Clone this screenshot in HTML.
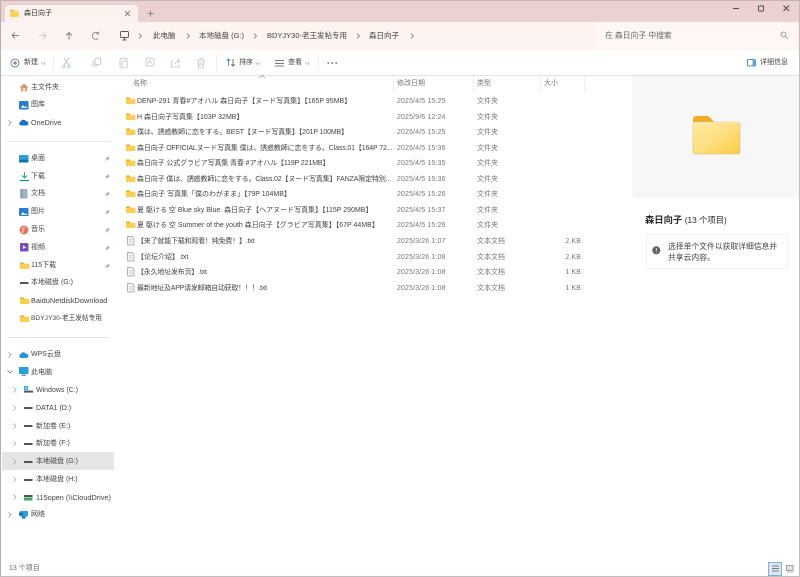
<!DOCTYPE html>
<html lang="zh">
<head>
<meta charset="utf-8">
<title>森日向子</title>
<style>
html,body{margin:0;padding:0;width:800px;height:577px;overflow:hidden;background:#fff;}
body{font-family:"Liberation Sans","Noto Sans CJK JP","Noto Sans CJK SC",sans-serif;font-size:7px;color:#3a3a3a;position:relative;filter:blur(.3px);}
.a{position:absolute;white-space:nowrap;}
.t{position:absolute;white-space:nowrap;line-height:12px;height:12px;}
svg{position:absolute;overflow:visible;}
.n{color:#444;font-size:7px;}
.d{color:#777;font-size:7px;letter-spacing:.13px;left:397px;}
.y{color:#777;font-size:7px;left:477px;}
.s{color:#777;font-size:7px;letter-spacing:.1px;right:219px;}
.f{color:#444;font-size:7px;left:137px;}
.h{color:#777;font-size:7px;top:78px;}
.tb{fill:none;stroke:#b8c4cc;stroke-width:.8;}
</style>
</head>
<body>
<!-- title / address / toolbar backgrounds -->
<div class="a" style="left:0;top:0;width:800px;height:22px;background:#ebd2d0;"></div>
<div class="a" style="left:0;top:22px;width:800px;height:28px;background:#fdf3f1;"></div>
<div class="a" style="left:0;top:50px;width:800px;height:25px;background:#fff;"></div>
<div class="a" style="left:0;top:75px;width:800px;height:1px;background:#e4e0e0;"></div>
<div class="a" style="left:0;top:0;width:1px;height:577px;background:#b5b0b0;"></div>
<div class="a" style="left:799px;top:0;width:1px;height:577px;background:#c0bcbc;"></div>
<div class="a" style="left:0;top:0;width:800px;height:1px;background:#c4b4b3;"></div>
<div class="a" style="left:0;top:576px;width:800px;height:1px;background:#c0bcbc;"></div>

<!-- tab -->
<div class="a" style="left:5px;top:5px;width:133px;height:17px;background:#fbf1ef;border-radius:4px 4px 0 0;"></div>
<svg style="left:10px;top:9px" width="9" height="8" viewBox="0 0 9 8"><path d="M0 1h3.500l1 1H9v6H0z" fill="#fbd45f"/><path d="M0 1h3.500l1 1H0z" fill="#eeb02c"/></svg>
<div class="t" style="left:24px;top:8px;font-size:7px;color:#333;">森日向子</div>
<svg style="left:124px;top:10px" width="7" height="7"><path d="M1 1l5 5M6 1L1 6" stroke="#666" stroke-width=".8"/></svg>
<svg style="left:147px;top:10px" width="7" height="7"><path d="M3.500 .5v6M.5 3.500h6" stroke="#777" stroke-width=".8"/></svg>

<!-- window controls -->
<svg style="left:730px;top:3px" width="62" height="12"><path d="M3 5.500h6" stroke="#444" stroke-width=".9"/><rect x="28.500" y="3" width="5" height="5" fill="none" stroke="#444" stroke-width=".9" rx=".6"/><path d="M53.500 2.500l5.500 5.500M59 2.500L53.500 8" stroke="#444" stroke-width=".9"/></svg>

<!-- nav -->
<svg style="left:11px;top:30px" width="100" height="12" viewBox="0 0 100 12">
<path d="M1 5.500h7M1 5.500l3-3M1 5.500l3 3" fill="none" stroke="#666" stroke-width=".8"/>
<path d="M28 5.500h7M35 5.500l-3-3M35 5.500l-3 3" fill="none" stroke="#c4c0c0" stroke-width=".8"/>
<path d="M58 9.500v-7M58 2.500l-3 3M58 2.500l3 3" fill="none" stroke="#666" stroke-width=".8"/>
<path d="M87.500 2.500a3.500 3.500 0 1 0 0 5.500M88 1v2.500h-2.500" transform="translate(-.5,.5)" fill="none" stroke="#777" stroke-width=".8"/>
</svg>
<svg style="left:120px;top:31px" width="10" height="10"><rect x=".5" y=".5" width="8" height="6" rx="1" fill="none" stroke="#555" stroke-width=".9"/><path d="M2.500 9h4M4.500 7v2" stroke="#555" stroke-width=".9"/></svg>
<svg style="left:138px;top:32px" width="280" height="8" fill="none" stroke="#666" stroke-width=".7"><path d="M1 1.500l2.500 2.500L1 6.500"/><path d="M49 1.500l2.500 2.500L49 6.500"/><path d="M116 1.500l2.500 2.500L116 6.500"/><path d="M219 1.500l2.500 2.500L219 6.500"/><path d="M273 1.500l2.500 2.500L273 6.500"/></svg>
<div class="t" style="left:153px;top:30px;color:#444;font-size:7.5px;">此电脑</div>
<div class="t" style="left:199px;top:30px;color:#444;font-size:7.5px;">本地磁盘 (G:)</div>
<div class="t" style="left:267px;top:30px;color:#444;font-size:7.5px;">BDYJY30-老王发帖专用</div>
<div class="t" style="left:369px;top:30px;color:#444;font-size:7.5px;">森日向子</div>
<div class="a" style="left:596px;top:23px;width:197px;height:26px;background:#fef7f6;"></div>
<div class="t" style="left:605px;top:30px;color:#666;font-size:7.8px;">在 森日向子 中搜索</div>
<svg style="left:780px;top:31px" width="9" height="9"><circle cx="3.500" cy="3.500" r="2.500" fill="none" stroke="#888" stroke-width=".8"/><path d="M5.500 5.500L8 8" stroke="#888" stroke-width=".8"/></svg>

<!-- toolbar -->
<svg style="left:10px;top:58px" width="10" height="10"><circle cx="5" cy="5" r="4" fill="none" stroke="#33689a" stroke-width=".7"/><path d="M5 3v4M3 5h4" stroke="#444" stroke-width=".7"/></svg>
<div class="t" style="left:24px;top:57px;color:#444;">新建</div>
<svg style="left:41px;top:62px" width="5" height="4"><path d="M.5 .5L2.500 2.500 4.500 .5" fill="none" stroke="#999" stroke-width=".6"/></svg>
<div class="a" style="left:53px;top:55px;width:1px;height:15px;background:#eee;"></div>
<svg style="left:62px;top:57px" width="145" height="12" viewBox="0 0 145 12" class="tb">
<path d="M2 1l5 7M7 1L2 8"/><circle cx="1.800" cy="9.500" r="1.300"/><circle cx="7" cy="9.500" r="1.300"/>
<rect x="33" y="1" width="5.500" height="6.500" rx="1"/><path d="M31 3.500v5.500h5"/>
<rect x="58" y="1.500" width="7" height="9" rx="1"/><rect x="60" y="4" width="5" height="7" rx=".8" fill="#fff"/>
<rect x="84" y="1" width="8" height="8" rx="1.500"/><path d="M86 7l2-4 2 4"/>
<path d="M111 4h-1.500v6h7.500V7.500"/><path d="M113 7c.5-2 2-3 4-3M115.500 2l2 2-2 2"/>
<path d="M135 3h8M136 3l.7 8h4.600l.7-8M137.500 1.500h3"/><path d="M138 5v4M140 5v4"/>
</svg>
<div class="a" style="left:216px;top:55px;width:1px;height:15px;background:#eee;"></div>
<svg style="left:226px;top:58px" width="10" height="9"><path d="M2.500 8V1M.8 2.700L2.500 1l1.700 1.700" fill="none" stroke="#3a76a8" stroke-width=".8"/><path d="M7 1v7M5.300 6.300L7 8l1.700-1.700" fill="none" stroke="#555" stroke-width=".8"/></svg>
<div class="t" style="left:239px;top:57px;color:#444;">排序</div>
<svg style="left:255px;top:62px" width="5" height="4"><path d="M.5 .5L2.500 2.500 4.500 .5" fill="none" stroke="#999" stroke-width=".6"/></svg>
<svg style="left:275px;top:60px" width="10" height="7"><path d="M0 .5h9M0 3.300h9M0 6h9" stroke="#555" stroke-width=".8"/></svg>
<div class="t" style="left:288px;top:57px;color:#444;">查看</div>
<svg style="left:305px;top:62px" width="5" height="4"><path d="M.5 .5L2.500 2.500 4.500 .5" fill="none" stroke="#999" stroke-width=".6"/></svg>
<div class="a" style="left:318px;top:55px;width:1px;height:15px;background:#eee;"></div>
<svg style="left:327px;top:62px" width="11" height="3"><circle cx="1.200" cy="1" r=".8" fill="#444"/><circle cx="5.200" cy="1" r=".8" fill="#444"/><circle cx="9.200" cy="1" r=".8" fill="#444"/></svg>
<svg style="left:747px;top:59px" width="10" height="8"><rect x=".5" y=".5" width="8" height="6.500" rx="1" fill="#fff" stroke="#33689a" stroke-width=".8"/><rect x="5.500" y=".5" width="3" height="6.500" fill="#5fa8dc"/></svg>
<div class="t" style="left:760px;top:57px;color:#444;">详细信息</div>

<!-- column headers -->
<svg style="left:258px;top:75px" width="8" height="4"><path d="M1 3l3-2.500L7 3" fill="none" stroke="#999" stroke-width=".7"/></svg>
<div class="t h" style="left:133px;">名称</div>
<div class="a" style="left:393px;top:76px;width:1px;height:16px;background:#eee;"></div>
<div class="t h" style="left:397px;">修改日期</div>
<div class="a" style="left:473px;top:76px;width:1px;height:16px;background:#eee;"></div>
<div class="t h" style="left:477px;">类型</div>
<div class="a" style="left:540px;top:76px;width:1px;height:16px;background:#eee;"></div>
<div class="t h" style="left:544px;">大小</div>
<div class="a" style="left:584px;top:76px;width:1px;height:16px;background:#eee;"></div>

<!-- file rows -->
<svg width="0" height="0" style="left:0;top:0"><defs>
<g id="fo"><path d="M0 .5h3.500l1 1.200H9.500V7H0z" fill="#fbcf55"/><path d="M0 .5h3.500l1 1.200H0z" fill="#e5a520"/></g>
<g id="tx"><path d="M.5.500H5l2 2V9H.5z" fill="#f4f4f4" stroke="#9a9a9a" stroke-width=".7"/><path d="M2 3.500h3.500M2 5h3.500M2 6.500h3.500" stroke="#bbb" stroke-width=".5"/></g>
</defs></svg>

<svg style="left:126px;top:97px" width="10" height="8"><use href="#fo"/></svg>
<div class="t f" style="top:96px;">DENP-291 青春#アオハル 森日向子【ヌード写真集】【165P 95MB】</div>
<div class="t d" style="top:96px;">2025/4/5 15:25</div><div class="t y" style="top:96px;">文件夹</div>

<svg style="left:126px;top:113px" width="10" height="8"><use href="#fo"/></svg>
<div class="t f" style="top:112px;">H 森日向子写真集【103P 32MB】</div>
<div class="t d" style="top:112px;">2025/9/6 12:24</div><div class="t y" style="top:112px;">文件夹</div>

<svg style="left:126px;top:128px" width="10" height="8"><use href="#fo"/></svg>
<div class="t f" style="top:127px;letter-spacing:-.14px;">僕は、誘惑教師に恋をする。BEST【ヌード写真集】【201P 100MB】</div>
<div class="t d" style="top:127px;">2025/4/5 15:25</div><div class="t y" style="top:127px;">文件夹</div>

<svg style="left:126px;top:144px" width="10" height="8"><use href="#fo"/></svg>
<div class="t f" style="top:143px;letter-spacing:-.14px;">森日向子 OFFICIALヌード写真集 僕は、誘惑教師に恋をする。Class.01【164P 72...</div>
<div class="t d" style="top:143px;">2025/4/5 15:36</div><div class="t y" style="top:143px;">文件夹</div>

<svg style="left:126px;top:159px" width="10" height="8"><use href="#fo"/></svg>
<div class="t f" style="top:158px;letter-spacing:-.12px;">森日向子 公式グラビア写真集 青春 #アオハル【119P 221MB】</div>
<div class="t d" style="top:158px;">2025/4/5 15:35</div><div class="t y" style="top:158px;">文件夹</div>

<svg style="left:126px;top:175px" width="10" height="8"><use href="#fo"/></svg>
<div class="t f" style="top:174px;letter-spacing:-.14px;">森日向子 僕は、誘惑教師に恋をする。Class.02【ヌード写真集】FANZA限定特別...</div>
<div class="t d" style="top:174px;">2025/4/5 15:36</div><div class="t y" style="top:174px;">文件夹</div>

<svg style="left:126px;top:190px" width="10" height="8"><use href="#fo"/></svg>
<div class="t f" style="top:189px;">森日向子 写真集「僕のわがまま」【79P 104MB】</div>
<div class="t d" style="top:189px;">2025/4/5 15:26</div><div class="t y" style="top:189px;">文件夹</div>

<svg style="left:126px;top:206px" width="10" height="8"><use href="#fo"/></svg>
<div class="t f" style="top:205px;">夏 駆ける 空 Blue sky Blue. 森日向子【ヘアヌード写真集】【115P 290MB】</div>
<div class="t d" style="top:205px;">2025/4/5 15:37</div><div class="t y" style="top:205px;">文件夹</div>

<svg style="left:126px;top:221px" width="10" height="8"><use href="#fo"/></svg>
<div class="t f" style="top:220px;">夏 駆ける 空 Summer of the youth 森日向子【グラビア写真集】【67P 44MB】</div>
<div class="t d" style="top:220px;">2025/4/5 15:26</div><div class="t y" style="top:220px;">文件夹</div>

<svg style="left:127px;top:236px" width="8" height="10"><use href="#tx"/></svg>
<div class="t f" style="top:236px;letter-spacing:-.2px;">【来了就能下载和观看！纯免费！】.txt</div>
<div class="t d" style="top:236px;">2025/3/26 1:07</div><div class="t y" style="top:236px;">文本文档</div><div class="t s" style="top:236px;">2 KB</div>

<svg style="left:127px;top:252px" width="8" height="10"><use href="#tx"/></svg>
<div class="t f" style="top:252px;">【论坛介绍】.txt</div>
<div class="t d" style="top:252px;">2025/3/26 1:08</div><div class="t y" style="top:252px;">文本文档</div><div class="t s" style="top:252px;">2 KB</div>

<svg style="left:127px;top:267px" width="8" height="10"><use href="#tx"/></svg>
<div class="t f" style="top:267px;letter-spacing:-.2px;">【永久地址发布页】.txt</div>
<div class="t d" style="top:267px;">2025/3/26 1:08</div><div class="t y" style="top:267px;">文本文档</div><div class="t s" style="top:267px;">1 KB</div>

<svg style="left:127px;top:283px" width="8" height="10"><use href="#tx"/></svg>
<div class="t f" style="top:283px;letter-spacing:-.24px;">最新地址及APP请发邮箱自动获取！！！.txt</div>
<div class="t d" style="top:283px;">2025/3/26 1:08</div><div class="t y" style="top:283px;">文本文档</div><div class="t s" style="top:283px;">1 KB</div>

<!-- sidebar -->
<svg style="left:19px;top:83px" width="10" height="9"><path d="M5 .5L.5 4.500 2 4.500V8.500h6V4.500h1.500z" fill="#d4936c"/><rect x="3.500" y="5" width="3" height="3.500" fill="#eadbd0"/></svg>
<div class="t n" style="left:31px;top:82px;">主文件夹</div>
<svg style="left:19px;top:101px" width="10" height="9"><rect width="9.500" height="8.500" rx="1" fill="#2a7cd0"/><path d="M1.500 7l2.500-3 2 2 1-1 1.500 2z" fill="#d8ecfa"/></svg>
<div class="t n" style="left:31px;top:99px;">图库</div>
<svg style="left:8px;top:120px" width="4" height="6"><path d="M.5 .5L3 3 .5 5.500" fill="none" stroke="#888" stroke-width=".7"/></svg>
<svg style="left:19px;top:119px" width="10" height="7"><path d="M2 6.500a2 2 0 0 1-.3-3.900A3 3 0 0 1 7 2.200a2.200 2.200 0 0 1 .8 4.300z" fill="#1272c8"/></svg>
<div class="t n" style="left:31px;top:117px;font-size:7.2px;">OneDrive</div>
<div class="a" style="left:7px;top:141px;width:103px;height:1px;background:#e6e6e6;"></div>

<svg style="left:19px;top:155px" width="10" height="8"><rect width="9.500" height="7.500" rx=".8" fill="#2a9fd8"/><path d="M0 6c3-2 6-2 9.500-.5v1.200a.8.800 0 0 1-.8.800H.8a.8.800 0 0 1-.8-.8z" fill="#0f6fb0"/></svg>
<div class="t n" style="left:31px;top:153px;">桌面</div>
<svg style="left:20px;top:172px" width="9" height="10"><path d="M4.500 0v5M2 3.500l2.500 2.500L7 3.500" fill="none" stroke="#2aab86" stroke-width="1.100"/><path d="M0 8.500h9" stroke="#1d8a90" stroke-width="1.200"/></svg>
<div class="t n" style="left:31px;top:171px;">下载</div>
<svg style="left:20px;top:189px" width="8" height="10"><rect width="7.500" height="9.500" rx=".7" fill="#9fb1c4"/><path d="M2 0v9.500" stroke="#7a8ea4" stroke-width=".7"/></svg>
<div class="t n" style="left:31px;top:188px;">文档</div>
<svg style="left:19px;top:208px" width="10" height="9"><rect width="9.500" height="8" rx=".8" fill="#2a7cd0"/><path d="M1.500 7l2.500-3 2 2 1-1 1.500 2z" fill="#d8ecfa"/></svg>
<div class="t n" style="left:31px;top:206px;">图片</div>
<svg style="left:19px;top:225px" width="10" height="10"><circle cx="5" cy="5" r="4.500" fill="#dc7a62"/><path d="M4 7V3.200l2-.5" fill="none" stroke="#fff" stroke-width=".7"/><circle cx="3.500" cy="7" r=".8" fill="#fff"/></svg>
<div class="t n" style="left:31px;top:224px;">音乐</div>
<svg style="left:20px;top:243px" width="9" height="9"><rect width="8.500" height="8.500" rx=".8" fill="#7a4fc4"/><path d="M3 2.500l3 1.800L3 6z" fill="#fff"/></svg>
<div class="t n" style="left:31px;top:242px;">视频</div>
<svg style="left:20px;top:262px" width="10" height="8"><use href="#fo"/></svg>
<div class="t n" style="left:31px;top:260px;">115下载</div>
<svg style="left:20px;top:282px" width="9" height="3"><rect width="8.500" height="2" fill="#555"/></svg>
<div class="t n" style="left:31px;top:277px;">本地磁盘 (G:)</div>
<svg style="left:20px;top:297px" width="10" height="8"><use href="#fo"/></svg>
<div class="t n" style="left:31px;top:295px;font-size:7.4px;">BaiduNetdiskDownload</div>
<svg style="left:20px;top:315px" width="10" height="8"><use href="#fo"/></svg>
<div class="t n" style="left:31px;top:313px;font-size:6.65px;">BDYJY30-老王发帖专用</div>
<svg style="left:104px;top:155px" width="7" height="120" fill="#aaa"><path id="p" d="M3.500 1l2.500 2.200-1.400.5-.5 1.800-.9-.9L1 6.500l1.400-2.300-.9-.9 1.800-.5z"/><use href="#p" y="18"/><use href="#p" y="35.500"/><use href="#p" y="53.500"/><use href="#p" y="71.500"/><use href="#p" y="89.500"/><use href="#p" y="107.500"/></svg>
<div class="a" style="left:7px;top:337px;width:103px;height:1px;background:#e6e6e6;"></div>

<svg style="left:8px;top:352px" width="4" height="6"><path d="M.5 .5L3 3 .5 5.500" fill="none" stroke="#888" stroke-width=".7"/></svg>
<svg style="left:19px;top:351px" width="10" height="8"><path d="M2 7a2 2 0 0 1-.3-3.900A3 3 0 0 1 7 2.700 2.200 2.200 0 0 1 7.800 7z" fill="#2796dc"/></svg>
<div class="t n" style="left:31px;top:349px;">WPS云盘</div>
<svg style="left:7px;top:370px" width="6" height="4"><path d="M.5 .5L3 3 5.500 .5" fill="none" stroke="#666" stroke-width=".7"/></svg>
<svg style="left:19px;top:367px" width="10" height="10"><rect width="9.500" height="7" rx=".7" fill="#27a0d8"/><rect x="2.500" y="7.500" width="4.500" height="1.500" fill="#7f99ad"/></svg>
<div class="t n" style="left:31px;top:367px;">此电脑</div>

<div class="a" style="left:2px;top:452px;width:112px;height:18px;background:#e5e5e5;"></div>

<svg style="left:13px;top:387px" width="4" height="134" fill="none" stroke="#999" stroke-width=".6"><path id="ch" d="M.5 .5L3 3 .5 5.500"/><use href="#ch" y="18"/><use href="#ch" y="36"/><use href="#ch" y="53.500"/><use href="#ch" y="71.500"/><use href="#ch" y="89.500"/><use href="#ch" y="107"/></svg>
<svg style="left:24px;top:386px" width="9" height="7"><rect x="0" y="0" width="1.800" height="1.800" fill="#1f9ad6"/><rect x="2.300" y="0" width="1.800" height="1.800" fill="#1f9ad6"/><rect x="0" y="2.300" width="1.800" height="1.800" fill="#1f9ad6"/><rect x="2.300" y="2.300" width="1.800" height="1.800" fill="#1f9ad6"/><rect y="4.600" width="9" height="2" fill="#555"/></svg>
<div class="t n" style="left:36px;top:385px;">Windows (C:)</div>
<svg style="left:24px;top:407px" width="9" height="3"><rect width="8.500" height="2" fill="#555"/></svg>
<div class="t n" style="left:36px;top:403px;">DATA1 (D:)</div>
<svg style="left:24px;top:425px" width="9" height="3"><rect width="8.500" height="2" fill="#555"/></svg>
<div class="t n" style="left:36px;top:421px;">新加卷 (E:)</div>
<svg style="left:24px;top:443px" width="9" height="3"><rect width="8.500" height="2" fill="#555"/></svg>
<div class="t n" style="left:36px;top:438px;">新加卷 (F:)</div>
<svg style="left:24px;top:461px" width="9" height="3"><rect width="8.500" height="2" fill="#555"/></svg>
<div class="t n" style="left:36px;top:456px;">本地磁盘 (G:)</div>
<svg style="left:24px;top:479px" width="9" height="3"><rect width="8.500" height="2" fill="#555"/></svg>
<div class="t n" style="left:36px;top:474px;">本地磁盘 (H:)</div>
<svg style="left:24px;top:495px" width="9" height="6"><rect width="8.500" height="2" fill="#555"/><rect y="2.500" width="8.500" height="3" fill="#3eaa6c"/></svg>
<div class="t n" style="left:36px;top:492px;font-size:7.3px;">115open (\\CloudDrive)</div>
<svg style="left:8px;top:512px" width="4" height="6"><path d="M.5 .5L3 3 .5 5.500" fill="none" stroke="#888" stroke-width=".7"/></svg>
<svg style="left:19px;top:510px" width="10" height="9"><rect x="1" y="1" width="8" height="5.500" rx=".6" fill="#2a9fd8"/><rect x="0" y="2.500" width="4" height="3" fill="#1a6fa8"/><rect x="3" y="6.500" width="3.500" height="2" fill="#1a6fa8"/></svg>
<div class="t n" style="left:31px;top:509px;">网络</div>

<div class="t" style="left:9px;top:563px;color:#666;font-size:7px;">13 个项目</div>

<!-- details pane -->
<div class="a" style="left:632px;top:76px;width:167px;height:122px;background:#f8f7f7;border-radius:0 0 4px 4px;"></div>
<svg style="left:692px;top:115px" width="49" height="40" viewBox="0 0 49 40">
<defs><linearGradient id="g" x1="0" y1="0" x2="1" y2="1"><stop offset="0" stop-color="#feeaa8"/><stop offset=".55" stop-color="#fedd7c"/><stop offset="1" stop-color="#fcca44"/></linearGradient></defs>
<path d="M1 4a3 3 0 0 1 3-3h11c1.500 0 2.500 1 4 2.500L22 7H1z" fill="#f0ae25"/>
<rect x="1" y="7" width="47" height="32" rx="2" fill="url(#g)" stroke="#dcb865" stroke-width=".5"/>
<path d="M1.500 8h46" stroke="#fff3c8" stroke-width="1"/>
</svg>
<div class="t" style="left:645px;top:214px;font-size:9.3px;font-weight:bold;color:#2a2a2a;">森日向子 <span style="font-weight:normal;font-size:8.300px;">(13 个项目)</span></div>
<div class="a" style="left:646px;top:234px;width:141px;height:33px;border:1px solid #f1f1f1;border-radius:3px;background:#fff;"></div>
<svg style="left:652px;top:246px" width="9" height="9"><circle cx="4.300" cy="4.300" r="4" fill="#616161"/><path d="M4.300 2v2.800M4.300 5.800v.9" stroke="#fff" stroke-width=".8"/></svg>
<div class="t" style="left:668px;top:241px;font-size:7.8px;color:#444;">选择单个文件以获取详细信息并</div>
<div class="t" style="left:668px;top:252px;font-size:7.8px;color:#444;">共享云内容。</div>

<!-- view toggle -->
<div class="a" style="left:768px;top:562px;width:14px;height:14px;background:#dbe9f4;border:1px solid #7fb0d4;box-sizing:border-box;"></div>
<svg style="left:772px;top:565px" width="8" height="8"><path d="M0 1h7M0 3.500h7M0 6h7" stroke="#555" stroke-width=".8"/></svg>
<svg style="left:786px;top:565px" width="9" height="8"><rect x=".5" y=".5" width="6.500" height="5" fill="#e6e6e6" stroke="#777" stroke-width=".7"/><path d="M1 7h6" stroke="#999" stroke-width=".7"/></svg>
</body>
</html>
